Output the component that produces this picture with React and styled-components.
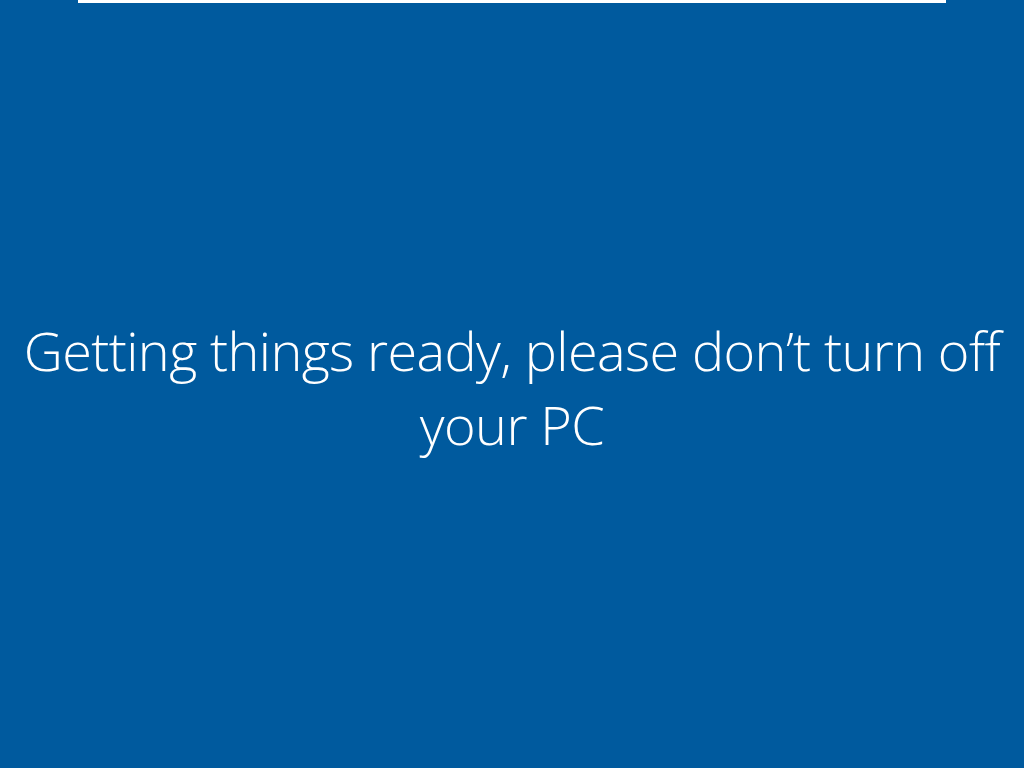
import React from "react";
import styled, { createGlobalStyle } from "styled-components";

const Global = createGlobalStyle`
  html, body { margin: 0; padding: 0; background: #005a9e; }
  #root { height: 100vh; }
`;

const Screen = styled.div`
  width: 1024px;
  height: 768px;
  background: #005a9e;
  display: flex;
  flex-direction: column;
  align-items: center;
  overflow: hidden;
`;

const TopBar = styled.div`
  width: 868px;
  height: 3px;
  background: #ffffff;
  flex-shrink: 0;
`;

const Message = styled.div`
  margin-top: 310px;
  width: 1024px;
  text-align: center;
  color: #ffffff;
  font-family: "Segoe UI Light", "Open Sans", "Noto Sans", sans-serif;
  font-weight: 300;
  font-size: 54px;
  line-height: 74px;
  letter-spacing: -0.6px;
`;

export default function App() {
  return (
    <>
      <Global />
      <Screen>
        <TopBar />
        <Message>
          Getting things ready, please don’t turn off
          <br />
          your PC
        </Message>
      </Screen>
    </>
  );
}
